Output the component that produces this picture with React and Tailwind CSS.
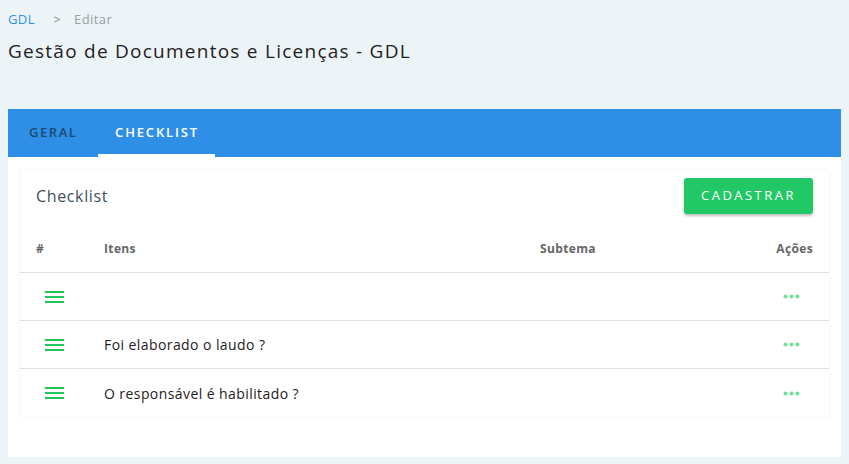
import React from 'react'

const rows = [
  { id: 1, item: '' },
  { id: 2, item: 'Foi elaborado o laudo ?' },
  { id: 3, item: 'O responsável é habilitado ?' },
]

const MenuIcon = () => (
  <svg width="19" height="14" viewBox="0 0 19 14" fill="none">
    <rect x="0" y="1" width="19" height="2" fill="#22c55e" />
    <rect x="0" y="6" width="19" height="2" fill="#22c55e" />
    <rect x="0" y="11" width="19" height="2" fill="#22c55e" />
  </svg>
)

const Dots = () => (
  <svg width="17" height="5" viewBox="0 0 17 5">
    <circle cx="2.5" cy="2.5" r="2" fill="#6ee09a" />
    <circle cx="8.5" cy="2.5" r="2" fill="#6ee09a" />
    <circle cx="14.5" cy="2.5" r="2" fill="#6ee09a" />
  </svg>
)

export default function App() {
  return (
    <div className="w-[849px] h-[464px] bg-[#edf4f7] px-2 pt-[11px] text-[#222]" style={{ fontFamily: '"Open Sans", sans-serif' }}>
      {/* Breadcrumb */}
      <div className="flex items-center text-[13px] h-[18px] tracking-[0.03em]">
        <span className="text-[#2f8fe6]">GDL</span>
        <span className="text-[#888] ml-[19px] text-[12px]">&gt;</span>
        <span className="text-[#9aa0a6] ml-[13px]">Editar</span>
      </div>
      <h1 className="mt-[9px] text-[19px] leading-[26px] text-[#1f2022] tracking-[0.066em]">Gestão de Documentos e Licenças - GDL</h1>

      <div className="mt-[45px] bg-white h-[348px]">
        {/* Tabs */}
        <div className="h-[48px] bg-[#2f8fe6] flex items-stretch">
          <div className="px-[21px] flex items-center text-[13px] font-semibold tracking-[0.12em] text-[#1a4a73]">GERAL</div>
          <div className="w-[117px] flex items-center justify-center text-[13px] font-semibold tracking-[0.14em] text-white border-b-[3px] border-white pt-[3px]">CHECKLIST</div>
        </div>

        <div className="mx-3 mt-[13px] shadow-[0_0_2px_rgba(0,0,0,0.08)]">
          <div className="flex items-center justify-between pl-4 pr-4 h-[50px] pt-[2px]">
            <span className="text-[16px] text-[#3d4f5c] tracking-[0.04em]">Checklist</span>
            <button className="bg-[#22c866] text-white text-[13px] tracking-[0.19em] w-[129px] h-[36px] rounded-[3px] shadow-[0_2px_3px_rgba(0,0,0,0.25)] font-medium">CADASTRAR</button>
          </div>

          <div className="flex items-center h-[53px] pt-[5px] border-b border-[#e0e0e0] text-[12px] font-bold text-[#666] tracking-[0.03em]">
            <div className="w-[84px] pl-4">#</div>
            <div className="flex-1">Itens</div>
            <div className="w-[229px]">Subtema</div>
            <div className="w-[60px] text-right pr-4">Ações</div>
          </div>

          {rows.map((r, i) => (
            <div key={r.id} className={`flex items-center h-[48px] text-[14px] text-[#1f2022] tracking-[0.03em] ${i < rows.length - 1 ? 'border-b border-[#e0e0e0]' : ''}`}>
              <div className="w-[84px] pl-[25px] flex items-center"><MenuIcon /></div>
              <div className="flex-1">{r.item}</div>
              <div className="w-[60px] flex justify-start pl-[14px]"><Dots /></div>
            </div>
          ))}
        </div>
      </div>
    </div>
  )
}
